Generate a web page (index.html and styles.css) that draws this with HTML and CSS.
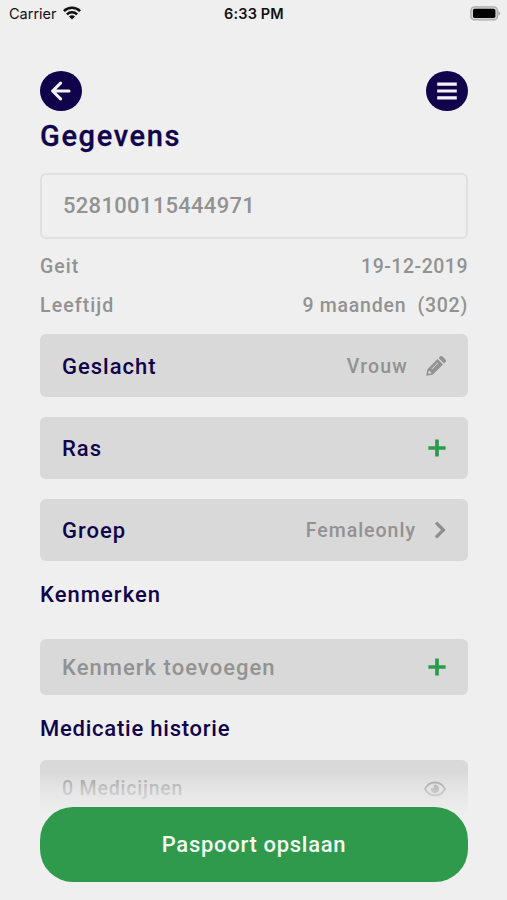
FILE: index.html
```html
<!DOCTYPE html>
<html lang="nl">
<head>
<meta charset="utf-8">
<title>Gegevens</title>
<link rel="stylesheet" href="styles.css">
</head>
<body>
<div class="screen">
  <div class="status">
    <div class="carrier"><span>Carrier</span>
      <svg class="wifi" viewBox="0 0 18 14" width="18" height="14"><g fill="none" stroke="#111" stroke-width="2.5"><path d="M.9 5.1C5.3.7 12.7.7 17.1 5.1"/><path d="M3.9 8.3c2.8-2.8 7.4-2.8 10.2 0"/></g><path fill="#111" d="M6 10.4c1.7-1.5 4.3-1.5 6 0L9 13.5z"/></svg>
    </div>
    <span class="time">6:33 PM</span>
    <svg class="battery" viewBox="0 0 31 15" width="31" height="15"><rect x=".9" y=".9" width="26.6" height="12.9" rx="3.6" fill="#d2d2d2" stroke="#aaa" stroke-width="1.3"/><rect x="3" y="2.8" width="22.4" height="9.2" rx="1.8" fill="#000"/><path d="M28.4 5.2c2.3.9 2.3 3.5 0 4.4z" fill="#aaa"/></svg>
  </div>
  <nav class="nav">
    <button class="round" aria-label="Terug"><svg viewBox="0 0 42 40" width="42" height="40"><path d="M29 20H13M20.6 12.2 12.6 20l8 7.8" fill="none" stroke="#f4f3f8" stroke-width="3.1" stroke-linecap="round" stroke-linejoin="round"/></svg></button>
    <button class="round" aria-label="Menu"><svg viewBox="0 0 42 40" width="42" height="40"><path d="M11.2 13.2h19.6M11.2 20h19.6M11.2 26.8h19.6" stroke="#f4f3f8" stroke-width="3.2"/></svg></button>
  </nav>
  <h1 class="title">Gegevens</h1>
  <div class="field"><span class="number">528100115444971</span></div>
  <div class="info"><span class="geit">Geit</span><span class="date">19-12-2019</span></div>
  <div class="info"><span class="age-label">Leeftijd</span><span class="age">9 maanden&nbsp; (302)</span></div>
  <div class="rows">
    <div class="row"><span class="label geslacht">Geslacht</span><span class="value vrouw">Vrouw</span>
      <svg class="icon pencil" viewBox="0 0 20 20" width="20" height="20"><path fill="#929292" fill-rule="evenodd" d="M.3 19.7 1.2 13.4 11.6 3l5.4 5.4L6.6 18.8zM2.6 15l-.4 2.800 2.8-.4.2-1.4-1.1-.1-.1-1.1zm9.2-8.6-6.5 6.5.6.6 6.5-6.5zM12.6 2 14.1.5c.7-.7 1.7-.7 2.4 0l3 3c.7.7.7 1.7 0 2.4L18 7.4z"/></svg></div>
    <div class="row"><span class="label ras">Ras</span>
      <svg class="icon plus" viewBox="0 0 18 18" width="18" height="18"><path d="M9 .4v17.2M.4 9h17.2" stroke="#2b9a4b" stroke-width="3.7"/></svg></div>
    <div class="row"><span class="label groep">Groep</span><span class="value female">Femaleonly</span>
      <svg class="icon chevron" viewBox="0 0 12 18" width="12" height="18"><path d="m2 1.6 7.4 7.4L2 16.4" fill="none" stroke="#8d8d8d" stroke-width="3.2"/></svg></div>
  </div>
  <h2 class="heading"><span class="kenmerken">Kenmerken</span></h2>
  <div class="row compact"><span class="placeholder">Kenmerk toevoegen</span>
    <svg class="icon plus" viewBox="0 0 18 18" width="18" height="18"><path d="M9 .4v17.2M.4 9h17.2" stroke="#2b9a4b" stroke-width="3.7"/></svg></div>
  <h2 class="heading history"><span class="medicatie">Medicatie historie</span></h2>
  <div class="row compact"><span class="value medicines">0 Medicijnen</span>
    <svg class="icon eye" viewBox="0 0 22 16" width="22" height="16"><path d="M1 8c4.6-8.6 15.4-8.6 20 0-4.6 8.6-15.4 8.6-20 0z" fill="none" stroke="#8d8d8d" stroke-width="1.9"/><path d="M11 3.8A4.2 4.2 0 1 1 6.9 7.1c.7.5 1.7.5 2.4-.1.9-.8.9-2.2.1-2.9q.8-.3 1.600-.3z" fill="#8d8d8d"/></svg></div>
  <div class="footer"><button class="save"><span>Paspoort opslaan</span></button></div>
</div>
</body>
</html>
```
FILE: styles.css
```css
* { box-sizing: border-box; }
body { margin: 0; background: #efefef; }
.screen {
  position: relative;
  width: 507px;
  height: 900px;
  overflow: hidden;
  padding: 0 39px 0 40px;
  background: #efefef;
  color: #929292;
  font-family: Roboto, "Liberation Sans", sans-serif;
  font-weight: 500;
  white-space: nowrap;
}
button { border: 0; padding: 0; font: inherit; }
svg { display: block; flex: none; }
.status {
  display: grid;
  grid-template-columns: 1fr auto 1fr;
  align-items: center;
  height: 26px;
  margin: 0 -33px 0 -31px;
  color: #111;
  font-family: Inter, sans-serif;
  font-size: 14.5px;
}
.carrier { display: flex; align-items: center; gap: 6px; font-weight: 400; }
.time { font-weight: 600; letter-spacing: .15px; margin-left: -2px; }
.battery { justify-self: end; }
.nav { display: flex; justify-content: space-between; margin-top: 45px; height: 41px; }
.round { width: 42px; height: 40px; border-radius: 50%; background: #10024b; }
.title { margin: 3px 0 0; height: 43px; line-height: 43px; font-size: 29px; font-weight: 500; color: #10024b; letter-spacing: 1.65px; -webkit-text-stroke: .3px currentColor; }
.field { display: flex; align-items: center; height: 66px; margin-top: 14.5px; padding-left: 21px; border: 2px solid #e0e0e0; border-radius: 6px; font-size: 22px; letter-spacing: .3px; }
.info { display: flex; justify-content: space-between; height: 39px; line-height: 39px; font-size: 19.5px; }
.field + .info { margin-top: 8px; }
.geit { letter-spacing: 1px; }
.date { letter-spacing: .5px; }
.age-label { letter-spacing: 1.1px; }
.age { letter-spacing: .75px; }
.rows { display: grid; gap: 20px; margin-top: 9.5px; }
.row { display: flex; align-items: center; height: 62.5px; padding: 1px 22px 0; border-radius: 6px; background: #d9d9d9; }
.rows .row:first-child { padding-top: 2px; }
.rows .row:nth-child(2) { height: 62px; }
.row.compact { height: 56px; }
.label { font-size: 22px; color: #10024b; letter-spacing: 1px; }
.value { margin-left: auto; font-size: 19.5px; letter-spacing: 1px; }
.vrouw { letter-spacing: 1.2px; }
.icon { margin-left: 18px; }
.plus { margin: 0 0 1px auto; }
.placeholder { font-size: 22px; letter-spacing: 1.03px; }
.heading { margin: 0; height: 77.5px; padding-top: 17.5px; line-height: 32px; font-size: 22px; font-weight: 500; color: #10024b; letter-spacing: 1.05px; }
.heading.history { height: 65.5px; padding-top: 18px; letter-spacing: .77px; }
.value.medicines { margin-left: 0; letter-spacing: .8px; }
.row .eye { margin-left: auto; }
.footer { position: absolute; left: 0; right: 0; bottom: 0; height: 129px; padding: 36px 39px 0 40px; background: linear-gradient(rgba(239,239,239,0), rgba(239,239,239,.55) 18px, #efefef 45px); }
.save { width: 100%; height: 75px; border-radius: 33px; background: #2f9a4c; color: #f5faf6; font-size: 22px; letter-spacing: .7px; }
```
